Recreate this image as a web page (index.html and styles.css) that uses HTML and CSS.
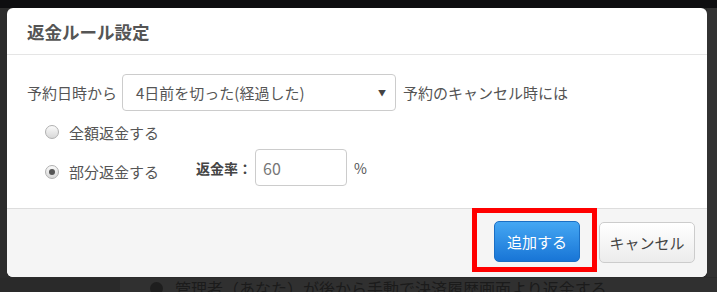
FILE: index.html
```html
<!DOCTYPE html>
<html lang="ja">
<head>
  <meta charset="UTF-8">
  <meta name="viewport" content="width=device-width, initial-scale=1.0">
  <title>返金ルール設定</title>
  <link rel="stylesheet" href="styles.css">
</head>
<body>
  <div class="topbar"></div>
  <div class="backdrop">
    <div class="modal">
      <div class="modal-header">
        <h3>返金ルール設定</h3>
      </div>

      <div class="modal-body">
        <div class="rule-row">
          <span>予約日時から</span>
          <div class="select">
            <span>4日前を切った(経過した)</span>
            <span class="arrow">▼</span>
          </div>
          <span>予約のキャンセル時には</span>
        </div>

        <label class="radio-row first">
          <span class="radio"></span>
          <span>全額返金する</span>
        </label>
        <div class="radio-row second">
          <label class="radio-label">
            <span class="radio checked"></span>
            <span>部分返金する</span>
          </label>
          <strong class="rate-label">返金率：</strong>
          <div class="rate-input">60</div>
          <span class="pct">%</span>
        </div>
      </div>

      <div class="modal-footer">
        <span class="mark">
          <button class="btn btn-primary">追加する</button>
        </span>
        <button class="btn btn-default">キャンセル</button>
      </div>
    </div>
    <div class="side"></div>
  </div>
  <div class="under">
    <span class="under-radio"></span>
    <span>管理者（あなた）が後から手動で決済履歴画面より返金する</span>
  </div>
</body>
</html>
```

FILE: styles.css
```css
/* Page behind the dialog */
body {
  margin: 0;
  background: #2c2c2c;
  font-family: "Noto Sans CJK JP", "Noto Sans", sans-serif;
  color: #555;
  overflow: hidden;
}
.topbar {
  height: 8px;
  background: #0e0e10;
}
.backdrop {
  display: flex;
  padding-left: 7px;
}
.side {
  flex: 1;
  background: #323232;
}
.under {
  display: flex;
  align-items: center;
  gap: 12px;
  padding-left: 150px;
  margin-top: 1px;
  font-size: 16px;
  line-height: 20px;
  color: #1b1b1b;
  background: linear-gradient(to right, #2a2a2a 120px, #303030 120px);
}
.under-radio {
  width: 13px;
  height: 13px;
  border-radius: 50%;
  background: #1e1e1e;
}

/* Dialog */
.modal {
  width: 700px;
  background: #fff;
  border-radius: 6px;
  overflow: hidden;
}
.modal-header {
  height: 46px;
  display: flex;
  align-items: center;
  padding: 0 20px;
  border-bottom: 1px solid #e5e5e5;
}
.modal-header h3 {
  margin: 0;
  font-size: 17.5px;
  font-weight: bold;
  color: #555;
}
.modal-body {
  height: 153px;
  padding: 19px 0 0 20px;
  box-sizing: border-box;
  font-size: 15px;
}
.rule-row {
  display: flex;
  align-items: center;
  gap: 5px;
}
.select {
  width: 274px;
  height: 37px;
  box-sizing: border-box;
  border: 1px solid #ccc;
  border-radius: 4px;
  display: flex;
  align-items: center;
  justify-content: space-between;
  padding: 0 9px 0 13px;
  margin-right: 2px;
  color: #555;
}
.select .arrow {
  font-size: 8px;
  color: #444;
}
.radio-row {
  display: flex;
  align-items: center;
}
.radio-row.first {
  margin: 10px 0 0 18px;
  gap: 10px;
  height: 22px;
}
.radio-row.second {
  margin: 6px 0 0 18px;
}
.radio-label {
  display: flex;
  align-items: center;
  gap: 10px;
  margin-top: 8px;
}
.radio {
  width: 12px;
  height: 12px;
  border: 1px solid #b0b0b0;
  border-radius: 50%;
  background: linear-gradient(#fafafa, #d8d8d8);
  position: relative;
}
.radio.checked::after {
  content: "";
  position: absolute;
  left: 3px;
  top: 3px;
  width: 6px;
  height: 6px;
  border-radius: 50%;
  background: #555;
}
.rate-label {
  margin-left: 37px;
  font-size: 14px;
  color: #444;
}
.rate-input {
  width: 92px;
  height: 37px;
  box-sizing: border-box;
  border: 1px solid #ccc;
  border-radius: 4px;
  padding-left: 7px;
  display: flex;
  align-items: center;
  margin-left: 3px;
  font-size: 16px;
  color: #777;
}
.pct {
  margin-left: 7px;
  font-size: 14px;
}

/* Footer */
.modal-footer {
  height: 69px;
  box-sizing: border-box;
  background: #f5f5f5;
  border-top: 1px solid #ddd;
  display: flex;
  justify-content: flex-end;
  align-items: flex-start;
  padding-right: 12px;
}
.mark {
  border: 5px solid #f00;
  padding: 8px 12px 5px 17px;
  margin-top: -1px;
}
.btn {
  height: 41px;
  border-radius: 5px;
  font-family: "Noto Sans CJK JP", "Noto Sans", sans-serif;
  font-size: 15px;
  cursor: pointer;
}
.btn-primary {
  width: 86px;
  color: #fff;
  border: 1px solid #1b6fc4;
  background: linear-gradient(#45a7f3, #1875d6);
}
.btn-default {
  width: 96px;
  margin: 13px 0 0 2px;
  color: #444;
  border: 1px solid #ccc;
  background: linear-gradient(#fff, #ececec);
}
```
